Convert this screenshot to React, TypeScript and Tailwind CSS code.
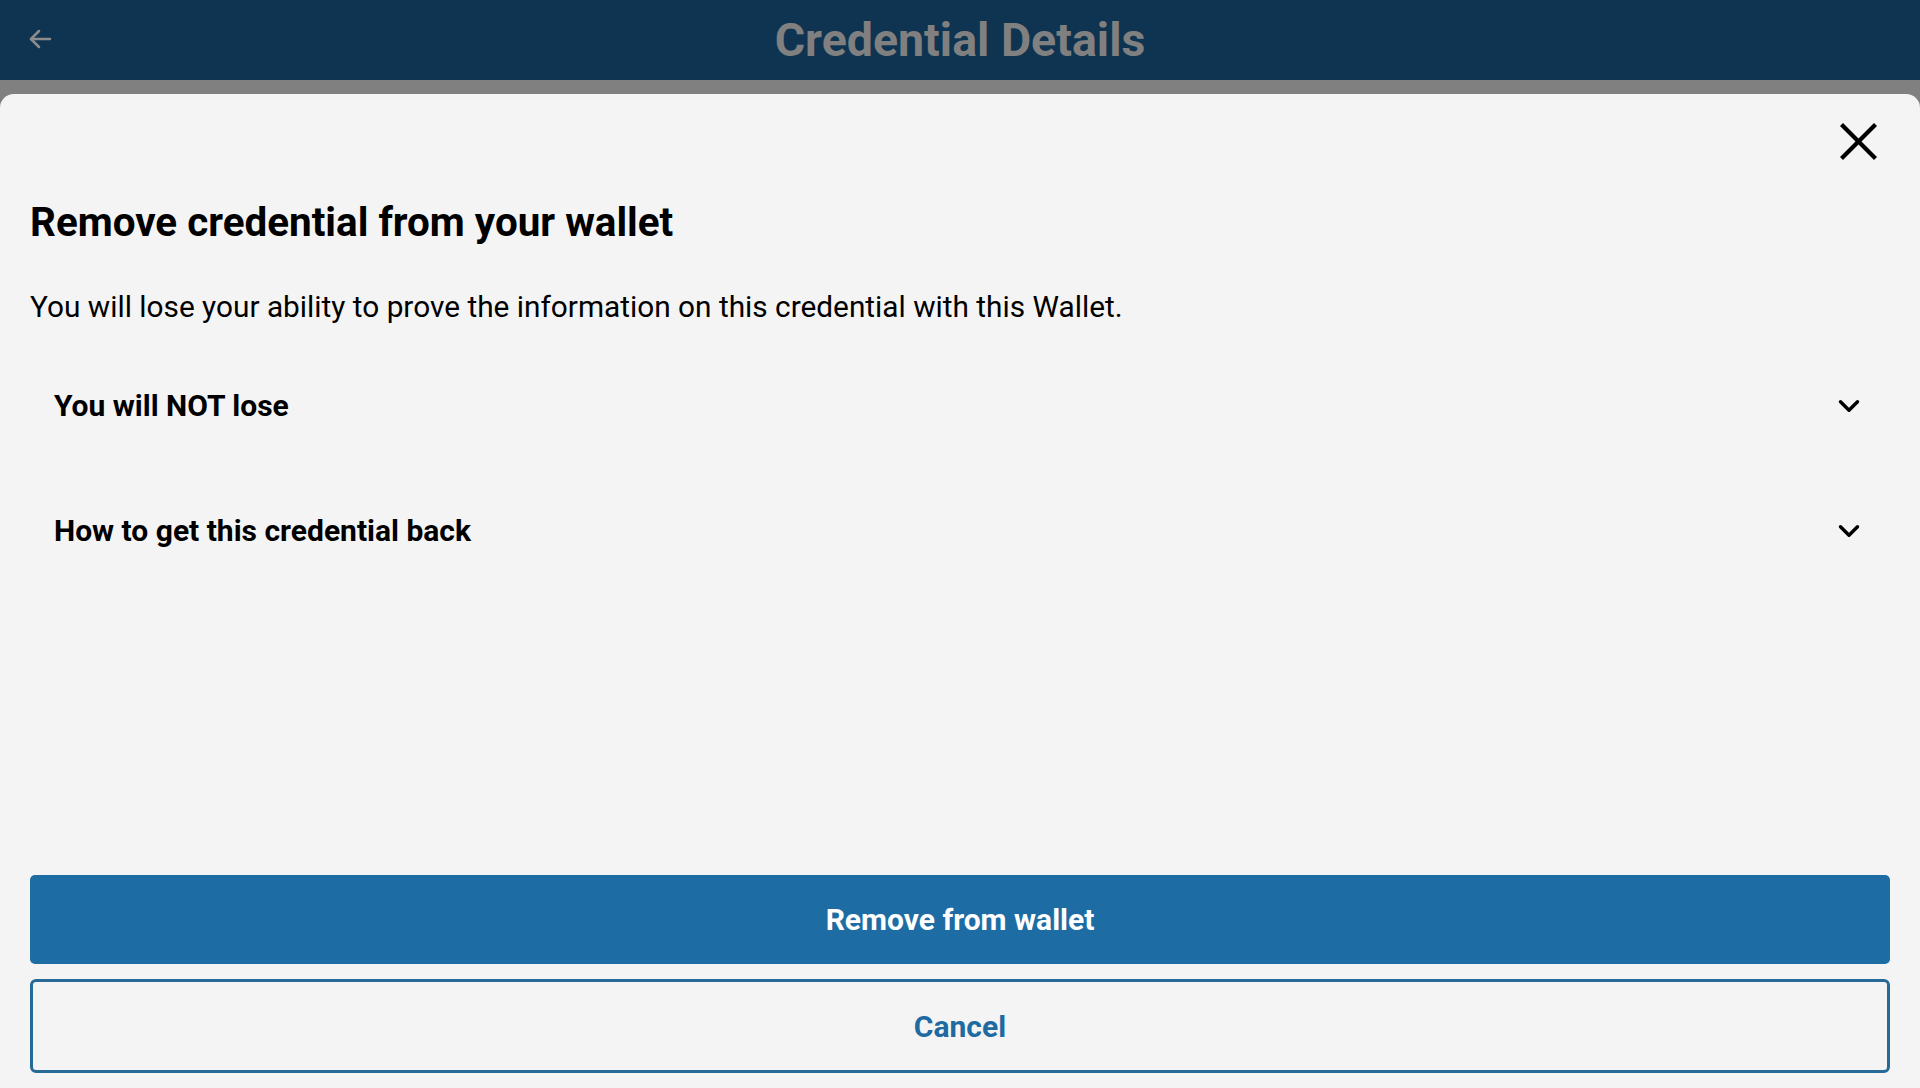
import { ChevronDown } from "lucide-react";

const font = { fontFamily: "Roboto, 'Noto Sans', sans-serif" };

const BackArrow = () => (
  <svg width="24" height="24" viewBox="0 0 24 24" fill="none" stroke="#8c8c8c" strokeWidth="2.5" strokeLinecap="round" strokeLinejoin="round">
    <path d="M22 12H3" />
    <path d="M11 4L3 12l8 8" />
  </svg>
);

const CloseIcon = () => (
  <svg width="37" height="37" viewBox="0 0 37 37" fill="none" stroke="#000" strokeWidth="4.2">
    <path d="M1.5 1.5l34 34" />
    <path d="M35.5 1.5l-34 34" />
  </svg>
);

const AccordionRow = ({ title }: { title: string }) => (
  <div className="flex h-[125px] items-center justify-between px-[24px]">
    <span className="text-[30px] font-bold leading-none text-black">{title}</span>
    <ChevronDown className="h-[34px] w-[34px] text-black" strokeWidth={2.4} />
  </div>
);

export default function App() {
  return (
    <div className="flex h-[1088px] w-full flex-col overflow-hidden bg-[#808080]" style={font}>
      <header className="relative flex h-[80px] shrink-0 items-center justify-center bg-[#0f3452]">
        <div className="absolute left-[28px] top-[27px]">
          <BackArrow />
        </div>
        <h1 className="text-[46.5px] font-bold leading-none text-[#808080]">Credential Details</h1>
      </header>

      <div className="flex flex-1 flex-col pt-[14px]">
        <div className="flex flex-1 flex-col rounded-t-[14px] bg-[#f4f4f4]">
          <div className="flex justify-end pr-[43px] pt-[29px]">
            <CloseIcon />
          </div>

          <div className="px-[30px]">
            <h2 className="mt-[43px] text-[40.4px] font-bold leading-none text-black">
              Remove credential from your wallet
            </h2>
            <p className="mt-[49px] text-[29.8px] leading-none text-black">
              You will lose your ability to prove the information on this credential with this Wallet.
            </p>

            <div className="mt-[21px]">
              <AccordionRow title="You will NOT lose" />
              <AccordionRow title="How to get this credential back" />
            </div>
          </div>

          <div className="mt-auto flex flex-col gap-[15px] px-[30px] pb-[15px]">
            <button className="flex h-[89px] items-center justify-center rounded-[5px] bg-[#1e6ca4] text-[30px] font-bold text-white">
              Remove from wallet
            </button>
            <button className="flex h-[94px] items-center justify-center rounded-[6px] border-[3px] border-[#276a98] text-[30px] font-bold text-[#1f6aa0]">
              Cancel
            </button>
          </div>
        </div>
      </div>
    </div>
  );
}
